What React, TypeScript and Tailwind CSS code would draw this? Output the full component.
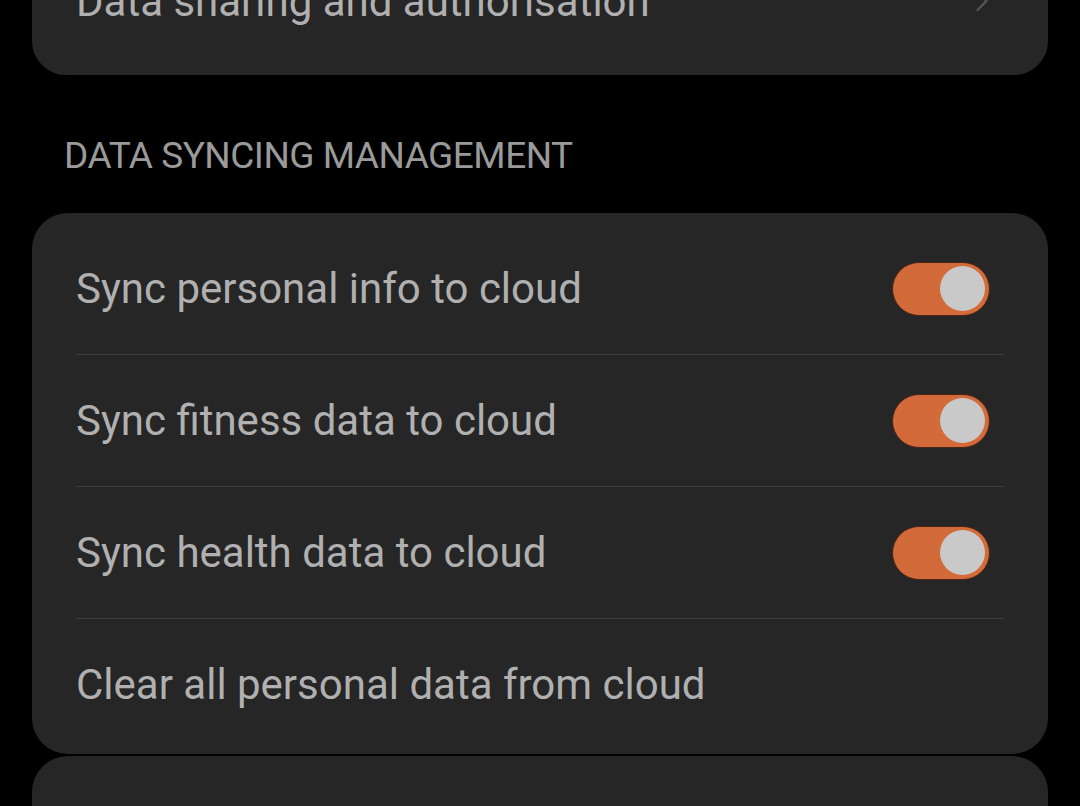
import { ChevronRight } from 'lucide-react';

type Row = { label: string; toggle?: boolean };

const rows: Row[] = [
    { label: 'Sync personal info to cloud', toggle: true },
    { label: 'Sync fitness data to cloud', toggle: true },
    { label: 'Sync health data to cloud', toggle: true },
    { label: 'Clear all personal data from cloud' },
];

function Toggle() {
    return (
        <div className="flex h-[54px] w-[98px] items-center justify-end rounded-full border border-[#4a2414] bg-[#d26a3a] pr-[4px]">
            <div className="h-[45px] w-[45px] rounded-full bg-[#c9c9c9]" />
        </div>
    );
}

export default function App() {
    return (
        <main className="h-[806px] overflow-hidden bg-black px-8 font-['Roboto',sans-serif]">
            <section className="-mt-[65px] rounded-[34px] bg-[#262626] pb-[8px]">
                <div className="flex h-[132px] items-center justify-between pl-11 pr-12">
                    <span className="text-[42px] text-[#b0b0b0]">Data sharing and authorisation</span>
                    <ChevronRight size={36} strokeWidth={1.5} className="text-[#555555]" />
                </div>
            </section>

            <div className="flex h-[138px] items-center px-8 pt-[24px]">
                <p className="text-[37px] tracking-[-0.5px] text-[#9a9a9a]">DATA SYNCING MANAGEMENT</p>
            </div>

            <section className="rounded-[36px] bg-[#262626] pt-[10px] pb-[4px]">
                {rows.map((row, i) => (
                    <div key={row.label} className="px-11">
                        {i > 0 && <div className="h-px bg-[#3c3c3c]" />}
                        <div className="flex h-[131px] items-center justify-between pr-[14px]">
                            <span className="text-[42px] text-[#b0b0b0]">{row.label}</span>
                            {row.toggle && <Toggle />}
                        </div>
                    </div>
                ))}
            </section>

            <section className="mt-[2px] h-[120px] rounded-[36px] bg-[#262626]" />
        </main>
    );
}
